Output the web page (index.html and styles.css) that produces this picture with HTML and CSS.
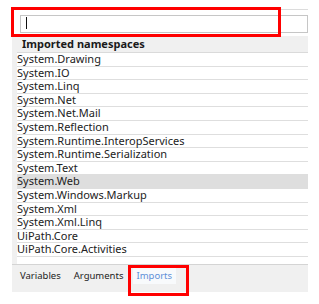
FILE: index.html
```html
<!DOCTYPE html>
<html lang="en">
<head>
  <meta charset="UTF-8">
  <title>Imports</title>
  <link rel="stylesheet" href="styles.css">
</head>
<body>
  <div class="panel">
    <!-- Search box -->
    <div class="search-row">
      <div class="search-box"><span class="caret"></span></div>
    </div>

    <!-- Namespace list -->
    <div class="list">
      <div class="list-header">Imported namespaces</div>
      <div class="row">System.Drawing</div>
      <div class="row">System.IO</div>
      <div class="row">System.Linq</div>
      <div class="row">System.Net</div>
      <div class="row">System.Net.Mail</div>
      <div class="row">System.Reflection</div>
      <div class="row">System.Runtime.InteropServices</div>
      <div class="row">System.Runtime.Serialization</div>
      <div class="row">System.Text</div>
      <div class="row selected">System.Web</div>
      <div class="row">System.Windows.Markup</div>
      <div class="row">System.Xml</div>
      <div class="row">System.Xml.Linq</div>
      <div class="row">UiPath.Core</div>
      <div class="row">UiPath.Core.Activities</div>
      <div class="row empty"></div>
    </div>

    <!-- Bottom tabs -->
    <div class="tabs">
      <span class="tab">Variables</span>
      <span class="tab">Arguments</span>
      <span class="tab active">Imports</span>
    </div>
  </div>

  <!-- Red annotation boxes -->
  <div class="mark mark-search"></div>
  <div class="mark mark-tab"></div>
</body>
</html>
```

FILE: styles.css
```css
/* Global */
body {
  margin: 0;
  background: #fff;
  font-family: 'Noto Sans', 'Open Sans', sans-serif;
  font-size: 11px;
  color: #222;
  position: relative;
  height: 304px;
  overflow: hidden;
}

/* Panel */
.panel {
  margin: 9px 0 0 12px;
  width: 296px;
  background: #f0f0f0;
  border-top: 1px solid #dcdcdc;
}

/* Search */
.search-row {
  background: #fff;
  padding: 5px 0 3px 8px;
}

.search-box {
  height: 15px;
  border: 1px solid #c6c6c6;
  background: #fff;
  padding: 1px 0 0 5px;
}

.caret {
  display: block;
  width: 1px;
  height: 12px;
  background: #111;
}

/* List */
.list {
  margin-left: 5px;
  background: #fff;
}

.list-header {
  height: 16px;
  line-height: 16px;
  padding-left: 5px;
  background: #f0f0f0;
  border-bottom: 1px solid #dadada;
  font-weight: bold;
  color: #1a1a1a;
}

.row {
  height: 12.6px;
  line-height: 12px;
  border-bottom: 1px solid #dedede;
  white-space: nowrap;
}

.row.selected {
  background: #dedede;
}

.row.empty {
  height: 7px;
  border-bottom: none;
}

/* Tabs */
.tabs {
  height: 28px;
  border-top: 1px solid #d4d4d4;
  display: flex;
  align-items: center;
  gap: 7px;
  padding: 0 0 5px 5px;
  box-sizing: border-box;
  font-size: 9.5px;
}

.tab {
  padding: 2px 3px;
  color: #222;
}

.tab.active {
  padding-right: 4px;
  color: #5f90d8;
  background: #f8fafc;
}

/* Annotations */
.mark {
  position: absolute;
  border: 3px solid #f00;
  box-sizing: border-box;
}

.mark-search {
  left: 11px;
  top: 7px;
  width: 270px;
  height: 30px;
}

.mark-tab {
  left: 128px;
  top: 265px;
  width: 61px;
  height: 31px;
}
```
